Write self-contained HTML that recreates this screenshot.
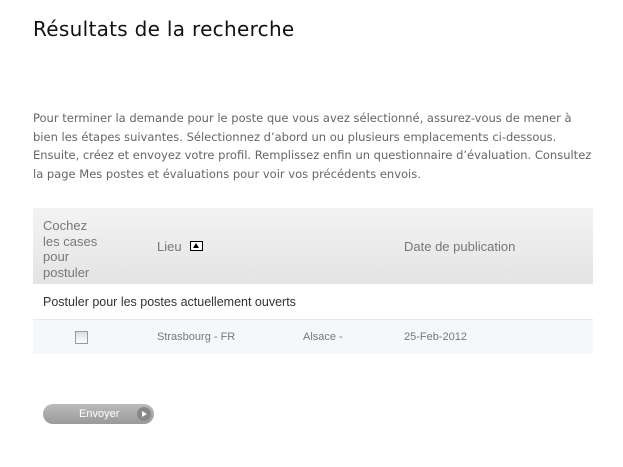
<!DOCTYPE html>
<html><head><style>
body{margin:0;background:#fff;width:623px;height:467px;overflow:hidden;position:relative;font-family:"Liberation Sans",sans-serif}
h1{position:absolute;left:33px;top:17px;margin:0;font:normal 20px "DejaVu Sans",sans-serif;color:#111;letter-spacing:0.3px}
p{position:absolute;left:33px;top:109px;width:562px;margin:0;font:11.5px/18.7px "DejaVu Sans",sans-serif;color:#666}
.hd{position:absolute;left:33px;top:208px;width:560px;height:76px;background:linear-gradient(#f3f3f3,#e4e4e4);color:#777;font-size:13px}
.r1{position:absolute;left:33px;top:284px;width:560px;height:35px;border-bottom:1px solid #e4e8ec;font-size:12.5px;color:#333}
.r2{position:absolute;left:33px;top:320px;width:560px;height:34px;background:#f4f8fb;font-size:11px;color:#777}
.cb{position:absolute;left:42px;top:11px;width:11px;height:11px;border:1px solid #999;background:linear-gradient(#ddd,#fff)}
.btn{position:absolute;left:43px;top:404px;width:111px;height:20px;border-radius:10px;background:linear-gradient(#bbb,#999);color:#fff;font-size:11px;line-height:20px}
</style></head><body>
<h1>Résultats de la recherche</h1>
<p>Pour terminer la demande pour le poste que vous avez sélectionné, assurez-vous de mener à bien les étapes suivantes. Sélectionnez d’abord un ou plusieurs emplacements ci-dessous. Ensuite, créez et envoyez votre profil. Remplissez enfin un questionnaire d’évaluation. Consultez la page Mes postes et évaluations pour voir vos précédents envois.</p>
<div class="hd">
<div style="position:absolute;left:10px;top:10px;line-height:15.5px">Cochez<br>les cases<br>pour<br>postuler</div>
<div style="position:absolute;left:124px;top:31px">Lieu</div>
<div style="position:absolute;left:157px;top:33px;width:11px;height:8px;border:1px solid #000;background:#fff"><div style="position:absolute;left:2px;top:1px;border-left:3.5px solid transparent;border-right:3.5px solid transparent;border-bottom:5px solid #000"></div></div>
<div style="position:absolute;left:371px;top:31px">Date de publication</div>
</div>
<div class="r1"><div style="position:absolute;left:10px;top:11px">Postuler pour les postes actuellement ouverts</div></div>
<div class="r2"><div class="cb"></div>
<div style="position:absolute;left:124px;top:11px">Strasbourg - FR</div>
<div style="position:absolute;left:270px;top:11px">Alsace -</div>
<div style="position:absolute;left:371px;top:11px">25-Feb-2012</div></div>
<div class="btn"><span style="position:absolute;left:36px">Envoyer</span><span style="position:absolute;right:3px;top:3px;width:14px;height:14px;border-radius:7px;background:#888"><span style="position:absolute;left:5px;top:4px;border-top:3px solid transparent;border-bottom:3px solid transparent;border-left:5px solid #fff"></span></span></div>
</body></html>
